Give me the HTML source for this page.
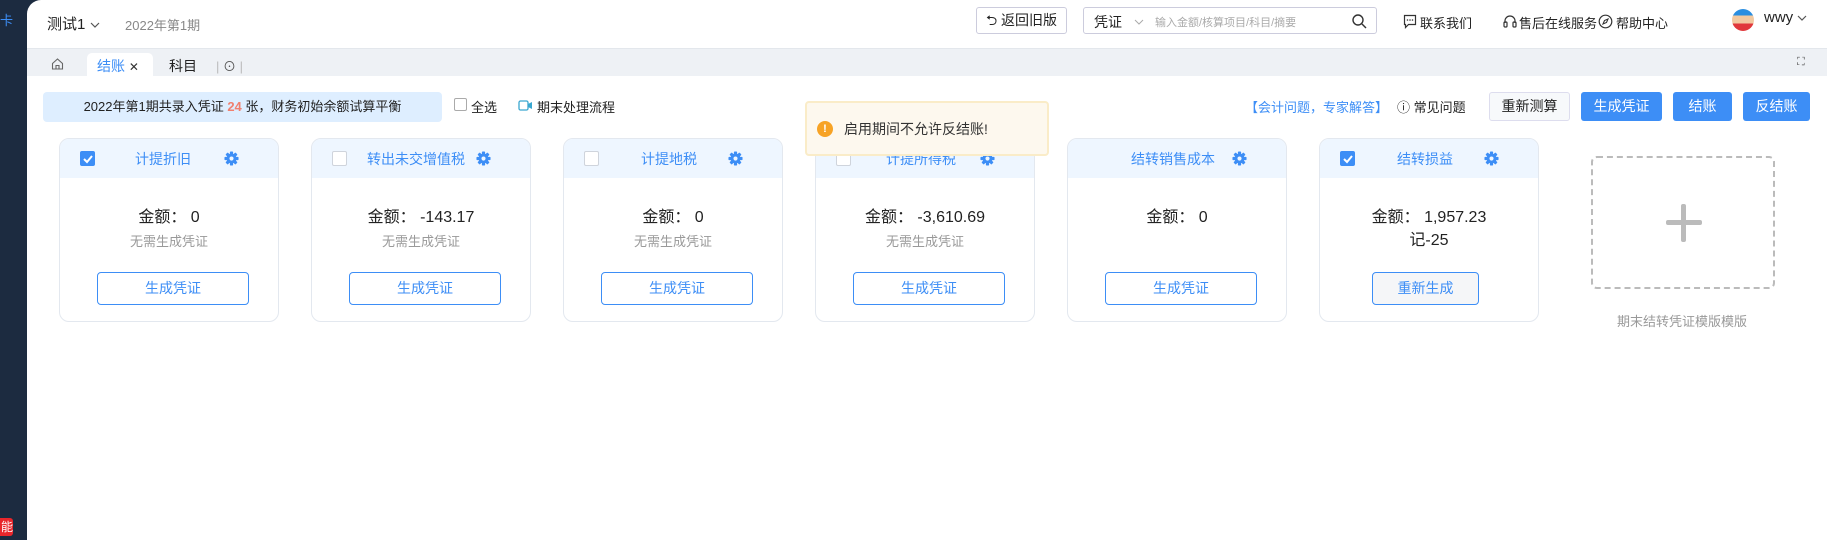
<!DOCTYPE html>
<html><head><meta charset="utf-8"><style>
*{margin:0;padding:0;box-sizing:border-box}
body{width:1827px;height:540px;overflow:hidden;background:#1c2b40;font-family:"Liberation Sans","Noto Sans CJK SC",sans-serif;font-size:14px;color:#333;position:relative}
.a{position:absolute;white-space:nowrap}
#main{position:absolute;left:27px;top:0;width:1800px;height:540px;background:#fff;border-top-left-radius:14px;overflow:hidden}
.card{position:absolute;top:138px;width:220px;height:184px;border:1px solid #e3e8ef;border-radius:10px;background:#fff;overflow:hidden}
.ch{height:39px;background:#eef6ff;position:relative}
.cb{position:absolute;left:20px;top:12px;width:15px;height:15px;border:1px solid #cfd4dc;border-radius:2px;background:#fff}
.cb.on{background:#3d8ef6;border-color:#3d8ef6}
.ct{position:absolute;top:10px;color:#3d8ef6;font-size:14px}
.gear{position:absolute;top:12px;width:15px;height:15px}
.amt{position:absolute;top:64px;width:100%;text-align:center;font-size:16px;color:#222}
.sub{position:absolute;top:92px;width:100%;text-align:center;font-size:13px;color:#999}
.btn{position:absolute;left:37px;top:133px;width:152px;height:33px;border:1px solid #3d8ef6;border-radius:4px;color:#3d8ef6;text-align:center;line-height:31px;font-size:14px}
.pb{position:absolute;top:92px;height:29px;background:#3d8ef6;color:#fff;border-radius:3px;text-align:center;line-height:29px;font-size:14px}
.hr{position:absolute;top:13px;font-size:13px;color:#222;white-space:nowrap}
</style></head><body>
<svg width="0" height="0" style="position:absolute"><defs><symbol id="g" viewBox="0 0 16 16"><g fill="#3d8ef6"><rect x="6.3" y="0.5" width="3.4" height="15" rx="0.8"/><rect x="6.3" y="0.5" width="3.4" height="15" rx="0.8" transform="rotate(45 8 8)"/><rect x="6.3" y="0.5" width="3.4" height="15" rx="0.8" transform="rotate(90 8 8)"/><rect x="6.3" y="0.5" width="3.4" height="15" rx="0.8" transform="rotate(135 8 8)"/><circle cx="8" cy="8" r="5.3"/></g><circle cx="8" cy="8" r="2.2" fill="#eef6ff"/></symbol></defs></svg>
<div class="a" style="left:0;top:10px;color:#3d8ef6;font-size:13px">卡</div>
<div class="a" style="left:0;top:518px;width:13px;height:18px;background:#e8262b;color:#fff;font-size:12px;line-height:18px;border-radius:0 3px 3px 0;overflow:hidden;text-align:right">能</div>
<div id="main">
 <div class="a" style="left:20px;top:13px;font-size:15px;color:#222">测试1 <svg width="10" height="8" viewBox="0 0 10 8"><path d="M1 2l4 4 4-4" stroke="#555" fill="none" stroke-width="1.2"/></svg></div>
 <div class="a" style="left:98px;top:15px;font-size:13px;color:#888">2022年第1期</div>
 <div class="a" style="left:949px;top:7px;width:91px;height:27px;border:1px solid #ccd;border-radius:3px;line-height:25px;text-align:center;font-size:14px;color:#222">⮌ 返回旧版</div>
 <div class="a" style="left:1056px;top:7px;width:294px;height:27px;border:1px solid #ccd;border-radius:3px">
  <span class="a" style="left:10px;top:4px;font-size:14px;color:#222">凭证</span>
  <svg class="a" style="left:50px;top:10px" width="10" height="8" viewBox="0 0 10 8"><path d="M1 2l4 4 4-4" stroke="#aaa" fill="none" stroke-width="1"/></svg>
  <span class="a" style="left:71px;top:6px;font-size:11px;color:#aaa">输入金额/核算项目/科目/摘要</span>
  <svg class="a" style="left:267px;top:5px" width="16" height="16" viewBox="0 0 16 16"><circle cx="7" cy="7" r="5" fill="none" stroke="#333" stroke-width="1.4"/><path d="M11 11l4 4" stroke="#333" stroke-width="1.4"/></svg>
 </div>
 <svg class="a" style="left:1376px;top:14px" width="14" height="15" viewBox="0 0 14 15"><path d="M1.5 1.5h11v9h-7l-3 3v-3h-1z" fill="none" stroke="#333" stroke-width="1.2"/><circle cx="4.5" cy="6" r=".8" fill="#333"/><circle cx="7" cy="6" r=".8" fill="#333"/><circle cx="9.5" cy="6" r=".8" fill="#333"/></svg>
 <div class="hr" style="left:1393px">联系我们</div>
 <svg class="a" style="left:1476px;top:14px" width="14" height="15" viewBox="0 0 14 15"><path d="M2 9V7a5 5 0 0 1 10 0v2" fill="none" stroke="#333" stroke-width="1.2"/><rect x="1" y="8" width="3" height="5" rx="1" fill="none" stroke="#333" stroke-width="1.2"/><rect x="10" y="8" width="3" height="5" rx="1" fill="none" stroke="#333" stroke-width="1.2"/></svg>
 <div class="hr" style="left:1492px">售后在线服务</div>
 <svg class="a" style="left:1571px;top:14px" width="15" height="15" viewBox="0 0 15 15"><circle cx="7.5" cy="7.5" r="6.3" fill="none" stroke="#333" stroke-width="1.2"/><path d="M10 5L6.5 6.5 5 10l3.5-1.5z" fill="none" stroke="#333" stroke-width="1.1"/></svg>
 <div class="hr" style="left:1589px">帮助中心</div>
 <div class="a" style="left:1705px;top:9px;width:22px;height:22px;border-radius:50%;background:linear-gradient(#2a8ee0 0 30%,#f2c9a0 30% 65%,#e0383b 65%)"></div>
 <div class="a" style="left:1737px;top:9px;font-size:15px;color:#222">wwy <svg width="10" height="8" viewBox="0 0 10 8"><path d="M1 2l4 4 4-4" stroke="#555" fill="none" stroke-width="1.2"/></svg></div>
 <div class="a" style="left:0;top:48px;width:1800px;height:28px;background:#eef1f5;border-top:1px solid #e3e7ec"></div>
 <svg class="a" style="left:24px;top:57px" width="13" height="13" viewBox="0 0 13 13"><path d="M1.5 6.5L6.5 2l5 4.5V12h-10z M5 12V8.5h3V12" fill="none" stroke="#666" stroke-width="1.1"/></svg>
 <div class="a" style="left:60px;top:53px;width:66px;height:23px;background:#fff;border-radius:5px 5px 0 0"></div>
 <div class="a" style="left:70px;top:56px;font-size:14px;color:#3d8ef6">结账 <span style="color:#333;font-size:12px">✕</span></div>
 <div class="a" style="left:142px;top:56px;font-size:14px;color:#222">科目</div>
 <div class="a" style="left:189px;top:56px;font-size:13px;color:#bbb">| <span style="color:#555">⊙</span> |</div>
 <div class="a" style="left:1770px;top:56px;font-size:11px;color:#555">⛶</div>
 <div class="a" style="left:16px;top:92px;width:399px;height:30px;background:#deeeff;border-radius:4px;text-align:center;line-height:30px;font-size:13px;color:#222">2022年第1期共录入凭证 <b style="color:#f08070">24</b> 张，财务初始余额试算平衡</div>
 <div class="a" style="left:427px;top:98px;width:13px;height:13px;border:1px solid #aaa;border-radius:2px"></div>
 <div class="a" style="left:444px;top:97px;font-size:13px;color:#222">全选</div>
 <svg class="a" style="left:491px;top:100px" width="15" height="11" viewBox="0 0 15 11"><rect x="1" y="1" width="9" height="9" rx="1.5" fill="none" stroke="#3aa7d0" stroke-width="1.3"/><path d="M10 4l4-2v7l-4-2z" fill="#3aa7d0"/></svg>
 <div class="a" style="left:510px;top:97px;font-size:13px;color:#222">期末处理流程</div>
 <div class="a" style="left:1218px;top:97px;font-size:13px;color:#3d8ef6">【会计问题，专家解答】</div>
 <div class="a" style="left:1370px;top:97px;font-size:13px;color:#222">ⓘ 常见问题</div>
 <div class="a" style="left:1462px;top:92px;width:81px;height:29px;border:1px solid #dde;border-radius:3px;text-align:center;line-height:27px;background:#f7f9fb;color:#222">重新测算</div>
 <div class="pb" style="left:1554px;width:81px">生成凭证</div>
 <div class="pb" style="left:1646px;width:59px">结账</div>
 <div class="pb" style="left:1716px;width:67px">反结账</div>
 <div class="card" style="left:32px"><div class="ch"><div class="cb on"><svg width="13" height="13"><path d="M3 7l3 3 5-6" stroke="#fff" stroke-width="2" fill="none"/></svg></div><span class="ct" style="left:75px">计提折旧</span><svg class="gear" style="left:164px"><use href="#g"/></svg></div><div class="amt">金额： 0</div><div class="sub">无需生成凭证</div><div class="btn">生成凭证</div></div>
 <div class="card" style="left:284px"><div class="ch"><div class="cb"></div><span class="ct" style="left:55px">转出未交增值税</span><svg class="gear" style="left:164px"><use href="#g"/></svg></div><div class="amt">金额： -143.17</div><div class="sub">无需生成凭证</div><div class="btn">生成凭证</div></div>
 <div class="card" style="left:536px"><div class="ch"><div class="cb"></div><span class="ct" style="left:77px">计提地税</span><svg class="gear" style="left:164px"><use href="#g"/></svg></div><div class="amt">金额： 0</div><div class="sub">无需生成凭证</div><div class="btn">生成凭证</div></div>
 <div class="card" style="left:788px"><div class="ch"><div class="cb"></div><span class="ct" style="left:70px">计提所得税</span><svg class="gear" style="left:164px"><use href="#g"/></svg></div><div class="amt">金额： -3,610.69</div><div class="sub">无需生成凭证</div><div class="btn">生成凭证</div></div>
 <div class="card" style="left:1040px"><div class="ch"><span class="ct" style="left:63px">结转销售成本</span><svg class="gear" style="left:164px"><use href="#g"/></svg></div><div class="amt">金额： 0</div><div class="btn">生成凭证</div></div>
 <div class="card" style="left:1292px"><div class="ch"><div class="cb on"><svg width="13" height="13"><path d="M3 7l3 3 5-6" stroke="#fff" stroke-width="2" fill="none"/></svg></div><span class="ct" style="left:77px">结转损益</span><svg class="gear" style="left:164px"><use href="#g"/></svg></div><div class="amt">金额： 1,957.23</div><div class="amt" style="top:87px">记-25</div><div class="btn" style="left:52px;width:107px;background:#f5f6f8">重新生成</div></div>
 <div class="a" style="left:1564px;top:156px;width:184px;height:133px;border:2px dashed #bbb;border-radius:6px">
  <div class="a" style="left:73px;top:62px;width:36px;height:5px;background:#bbb;border-radius:2px"></div>
  <div class="a" style="left:88px;top:46px;width:5px;height:38px;background:#bbb;border-radius:2px"></div>
 </div>
 <div class="a" style="left:1590px;top:311px;font-size:13px;color:#999">期末结转凭证模版模版</div>
 <div class="a" style="left:778px;top:101px;width:244px;height:55px;background:#fdf8ee;border:2px solid #faecc8;border-radius:4px">
  <div class="a" style="left:10px;top:18px;width:16px;height:16px;border-radius:50%;background:#f7a325;color:#fff;font-size:11px;font-weight:bold;text-align:center;line-height:16px">!</div>
  <div class="a" style="left:37px;top:16px;font-size:14px;color:#333">启用期间不允许反结账!</div>
 </div>
</div>
</body></html>
